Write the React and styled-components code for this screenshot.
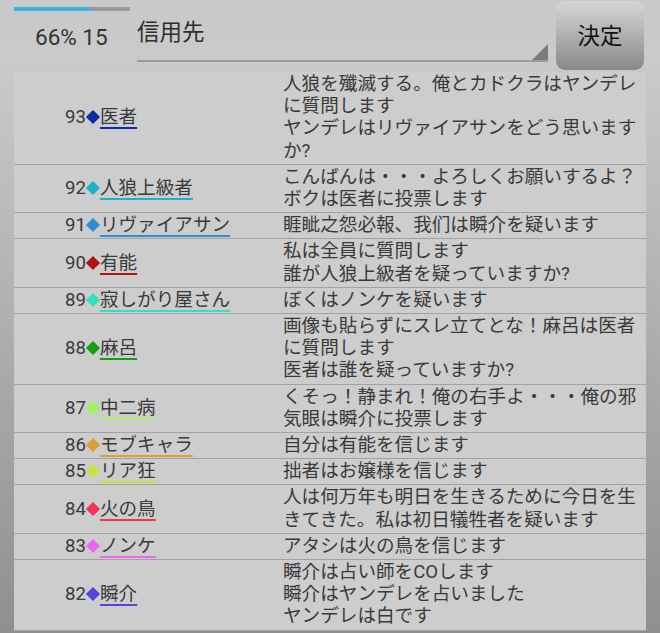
import React from "react";
import styled, { createGlobalStyle } from "styled-components";

const rows = [
  { no: 93, name: "医者", color: "#0b2ba6", text: ["人狼を殲滅する。俺とカドクラはヤンデレに質問します", "ヤンデレはリヴァイアサンをどう思いますか?"] },
  { no: 92, name: "人狼上級者", color: "#1ab3c9", text: ["こんばんは・・・よろしくお願いするよ？", "ボクは医者に投票します"] },
  { no: 91, name: "リヴァイアサン", color: "#2b8fd6", text: ["睚眦之怨必報、我们は瞬介を疑います"] },
  { no: 90, name: "有能", color: "#b01212", text: ["私は全員に質問します", "誰が人狼上級者を疑っていますか?"] },
  { no: 89, name: "寂しがり屋さん", color: "#33e0c4", text: ["ぼくはノンケを疑います"] },
  { no: 88, name: "麻呂", color: "#12a012", text: ["画像も貼らずにスレ立てとな！麻呂は医者に質問します", "医者は誰を疑っていますか?"] },
  { no: 87, name: "中二病", color: "#a4f25e", text: ["くそっ！静まれ！俺の右手よ・・・俺の邪気眼は瞬介に投票します"] },
  { no: 86, name: "モブキャラ", color: "#d9a132", text: ["自分は有能を信じます"] },
  { no: 85, name: "リア狂", color: "#c9e23f", text: ["拙者はお嬢様を信じます"] },
  { no: 84, name: "火の鳥", color: "#f23352", text: ["人は何万年も明日を生きるために今日を生きてきた。私は初日犠牲者を疑います"] },
  { no: 83, name: "ノンケ", color: "#f062f0", text: ["アタシは火の鳥を信じます"] },
  { no: 82, name: "瞬介", color: "#5443e0", text: ["瞬介は占い師をCOします", "瞬介はヤンデレを占いました", "ヤンデレは白です"] },
];

export default function App() {
  return (
    <Page>
      <GlobalStyle />
      <Header>
        <Status>
          <Progress>
            <ProgressFill style={{ width: "66%" }} />
          </Progress>
          <Count>66% 15</Count>
        </Status>
        <Spinner>信用先</Spinner>
        <DecideButton>決定</DecideButton>
      </Header>
      <Table>
        {rows.map((r) => (
          <Row key={r.no}>
            <NameCell>
              {r.no}
              <Diamond $color={r.color} />
              <Name $color={r.color}>{r.name}</Name>
            </NameCell>
            <MessageCell>
              {r.text.map((t, i) => (
                <div key={i}>{t}</div>
              ))}
            </MessageCell>
          </Row>
        ))}
      </Table>
    </Page>
  );
}

const GlobalStyle = createGlobalStyle`
  html, body {
    margin: 0;
    padding: 0;
    height: 633px;
    overflow: hidden;
  }
  body {
    background: linear-gradient(#c9c9c9, #cacaca 10%, #8f8f8f);
    font-family: Roboto, "Noto Sans CJK JP", sans-serif;
    color: #383838;
  }
`;

const Page = styled.div`
  width: 660px;
  height: 633px;
  padding: 0 14px;
  box-sizing: border-box;
  overflow: hidden;
`;

const Header = styled.div`
  display: flex;
  height: 72px;
`;

const Status = styled.div`
  width: 123px;
  display: flex;
  flex-direction: column;
`;

const Progress = styled.div`
  margin-top: 7px;
  width: 116px;
  height: 4px;
  background: #9a9a9a;
`;

const ProgressFill = styled.div`
  height: 100%;
  background: #3fb2e2;
`;

const Count = styled.div`
  margin-top: 12px;
  padding-left: 21px;
  font-size: 22.5px;
  line-height: 28px;
  color: #333;
`;

const Spinner = styled.div`
  position: relative;
  flex: 1;
  height: 62px;
  padding-top: 18px;
  box-sizing: border-box;
  border-bottom: 2px solid #9b9b9b;
  font-size: 22.5px;
  line-height: 28px;
  color: #2e2e2e;

  &::after {
    content: "";
    position: absolute;
    right: 0;
    bottom: 0;
    border-style: solid;
    border-width: 0 0 16px 16px;
    border-color: transparent transparent #7a7a7a transparent;
  }
`;

const DecideButton = styled.div`
  width: 88px;
  height: 69px;
  margin: 1px 2px 0 8px;
  border-radius: 9px;
  background: linear-gradient(#d6d6d6, #b4b4b4 45%, #888888);
  display: flex;
  align-items: center;
  justify-content: center;
  font-size: 22.5px;
  color: #111;
  padding-bottom: 4px;
  box-sizing: border-box;
`;

const Table = styled.div`
  background: #cdcdcd;
`;

const Row = styled.div`
  display: grid;
  grid-template-columns: 269px 1fr;
  padding: 1px 0 2px;
  border-bottom: 1px solid #a2a2a2;
  font-size: 18.6px;
  line-height: 22.2px;
`;

const NameCell = styled.div`
  display: flex;
  align-items: center;
  padding-left: 51px;
  color: #3a3a3a;
`;

const Diamond = styled.span`
  display: inline-block;
  width: 10px;
  height: 10px;
  margin: 0 2px 0 2px;
  background: ${(p) => p.$color};
  transform: rotate(45deg);
`;

const Name = styled.span`
  white-space: nowrap;
  text-decoration: underline;
  text-decoration-color: ${(p) => p.$color};
  text-decoration-thickness: 2px;
  text-underline-offset: 4px;
`;

const MessageCell = styled.div`
  padding-right: 6px;
  color: #3a3a3a;
`;
